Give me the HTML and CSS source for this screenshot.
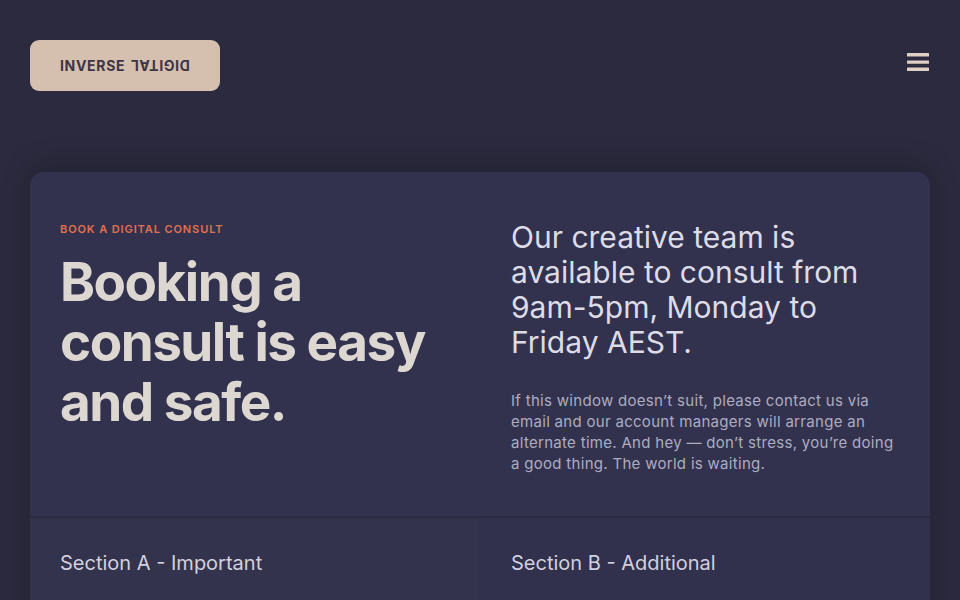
FILE: index.html
```html
<!DOCTYPE html>
<html lang="en">
<head>
  <meta charset="UTF-8" />
  <meta name="viewport" content="width=device-width,initial-scale=1.0">
  <title>Inverse Digital - Book a consult</title>
  <link rel="stylesheet" href="styles.css">
</head>
<body>
  <header class="topbar">
    <a class="logo" href="#">INVERSE <span class="flip">DIGITAL</span></a>
    <button class="menu" aria-label="Menu">
      <svg width="24" height="20" viewBox="0 0 24 20">
        <rect x="1" y="1" width="22" height="3.4" rx="0.5" />
        <rect x="1" y="8.4" width="22" height="3.4" rx="0.5" />
        <rect x="1" y="15.6" width="22" height="3.4" rx="0.5" />
      </svg>
    </button>
  </header>

  <main class="card">
    <section class="hero">
      <div class="hero-left">
        <p class="eyebrow">BOOK A DIGITAL CONSULT</p>
        <h1>Booking a consult is easy and safe.</h1>
      </div>
      <div class="hero-right">
        <p class="lead">Our creative team is available to consult from 9am-5pm, Monday to Friday AEST.</p>
        <p class="note">If this window doesn’t suit, please contact us via email and our account managers will arrange an alternate time. And hey — don’t stress, you’re doing a good thing. The world is waiting.</p>
      </div>
    </section>

    <div class="sections">
      <section class="part part-a">
        <h2>Section A - Important</h2>
      </section>
      <section class="part part-b">
        <h2>Section B - Additional</h2>
      </section>
    </div>
  </main>
</body>
</html>
```

FILE: styles.css
```css
html, body {
  margin: 0;
  padding: 0;
  height: 100vh;
  overflow: hidden;
  background-color: #2b2a3e;
  font-family: Inter, "Noto Sans", sans-serif;
}

.topbar {
  display: flex;
  justify-content: space-between;
  align-items: flex-start;
  padding: 40px 30px 0 30px;
  height: 91px;
  box-sizing: border-box;
}

.logo {
  display: flex;
  align-items: center;
  justify-content: center;
  gap: 5px;
  width: 190px;
  height: 51px;
  box-sizing: border-box;
  background: #d5c0af;
  border-radius: 9px;
  color: #3d3446;
  font-weight: 700;
  font-size: 14px;
  letter-spacing: 0.7px;
  text-decoration: none;
}

.flip {
  display: inline-block;
  transform: rotate(180deg);
}

.menu {
  margin-top: 12px;
  padding: 0;
  border: 0;
  background: none;
  cursor: pointer;
}

.menu svg {
  display: block;
  fill: #e0cfc4;
}

.card {
  margin: 81px 30px 0 30px;
  background: #32324e;
  border-radius: 14px 14px 0 0;
  box-shadow: 0 -6px 30px rgba(0,0,0,0.18);
  overflow: hidden;
}

.hero {
  display: grid;
  grid-template-columns: 1fr 1fr;
  padding: 50px 0 42px 0;
  border-bottom: 2px solid #2a2a41;
}

.hero-left, .hero-right {
  padding: 0 30px;
}

.hero-right {
  padding-left: 31px;
}

.eyebrow {
  margin: 0 0 16px 0;
  color: #e0704f;
  font-size: 11px;
  line-height: 14px;
  font-weight: 600;
  letter-spacing: 0.9px;
}

h1 {
  margin: 0;
  color: #ddd7d1;
  font-size: 53px;
  line-height: 60px;
  font-weight: 700;
  letter-spacing: -1.5px;
}

.lead {
  margin: -2px 0 30px 0;
  color: #dddce6;
  font-size: 30px;
  line-height: 35px;
  font-weight: 400;
}

.note {
  margin: 0;
  color: #aeacc0;
  font-size: 15px;
  line-height: 21px;
  letter-spacing: 0.3px;
}

.sections {
  display: grid;
  grid-template-columns: 1fr 1fr;
}

.part {
  padding: 33px 30px 60px 30px;
  height: 200px;
}

.part-a {
  background: #34334d;
  border-right: 1px solid #303049;
}

.part-b {
  background: #31314d;
  padding-left: 31px;
}

h2 {
  margin: 0;
  color: #d2d0de;
  font-size: 20px;
  line-height: 24px;
  font-weight: 400;
}
```
